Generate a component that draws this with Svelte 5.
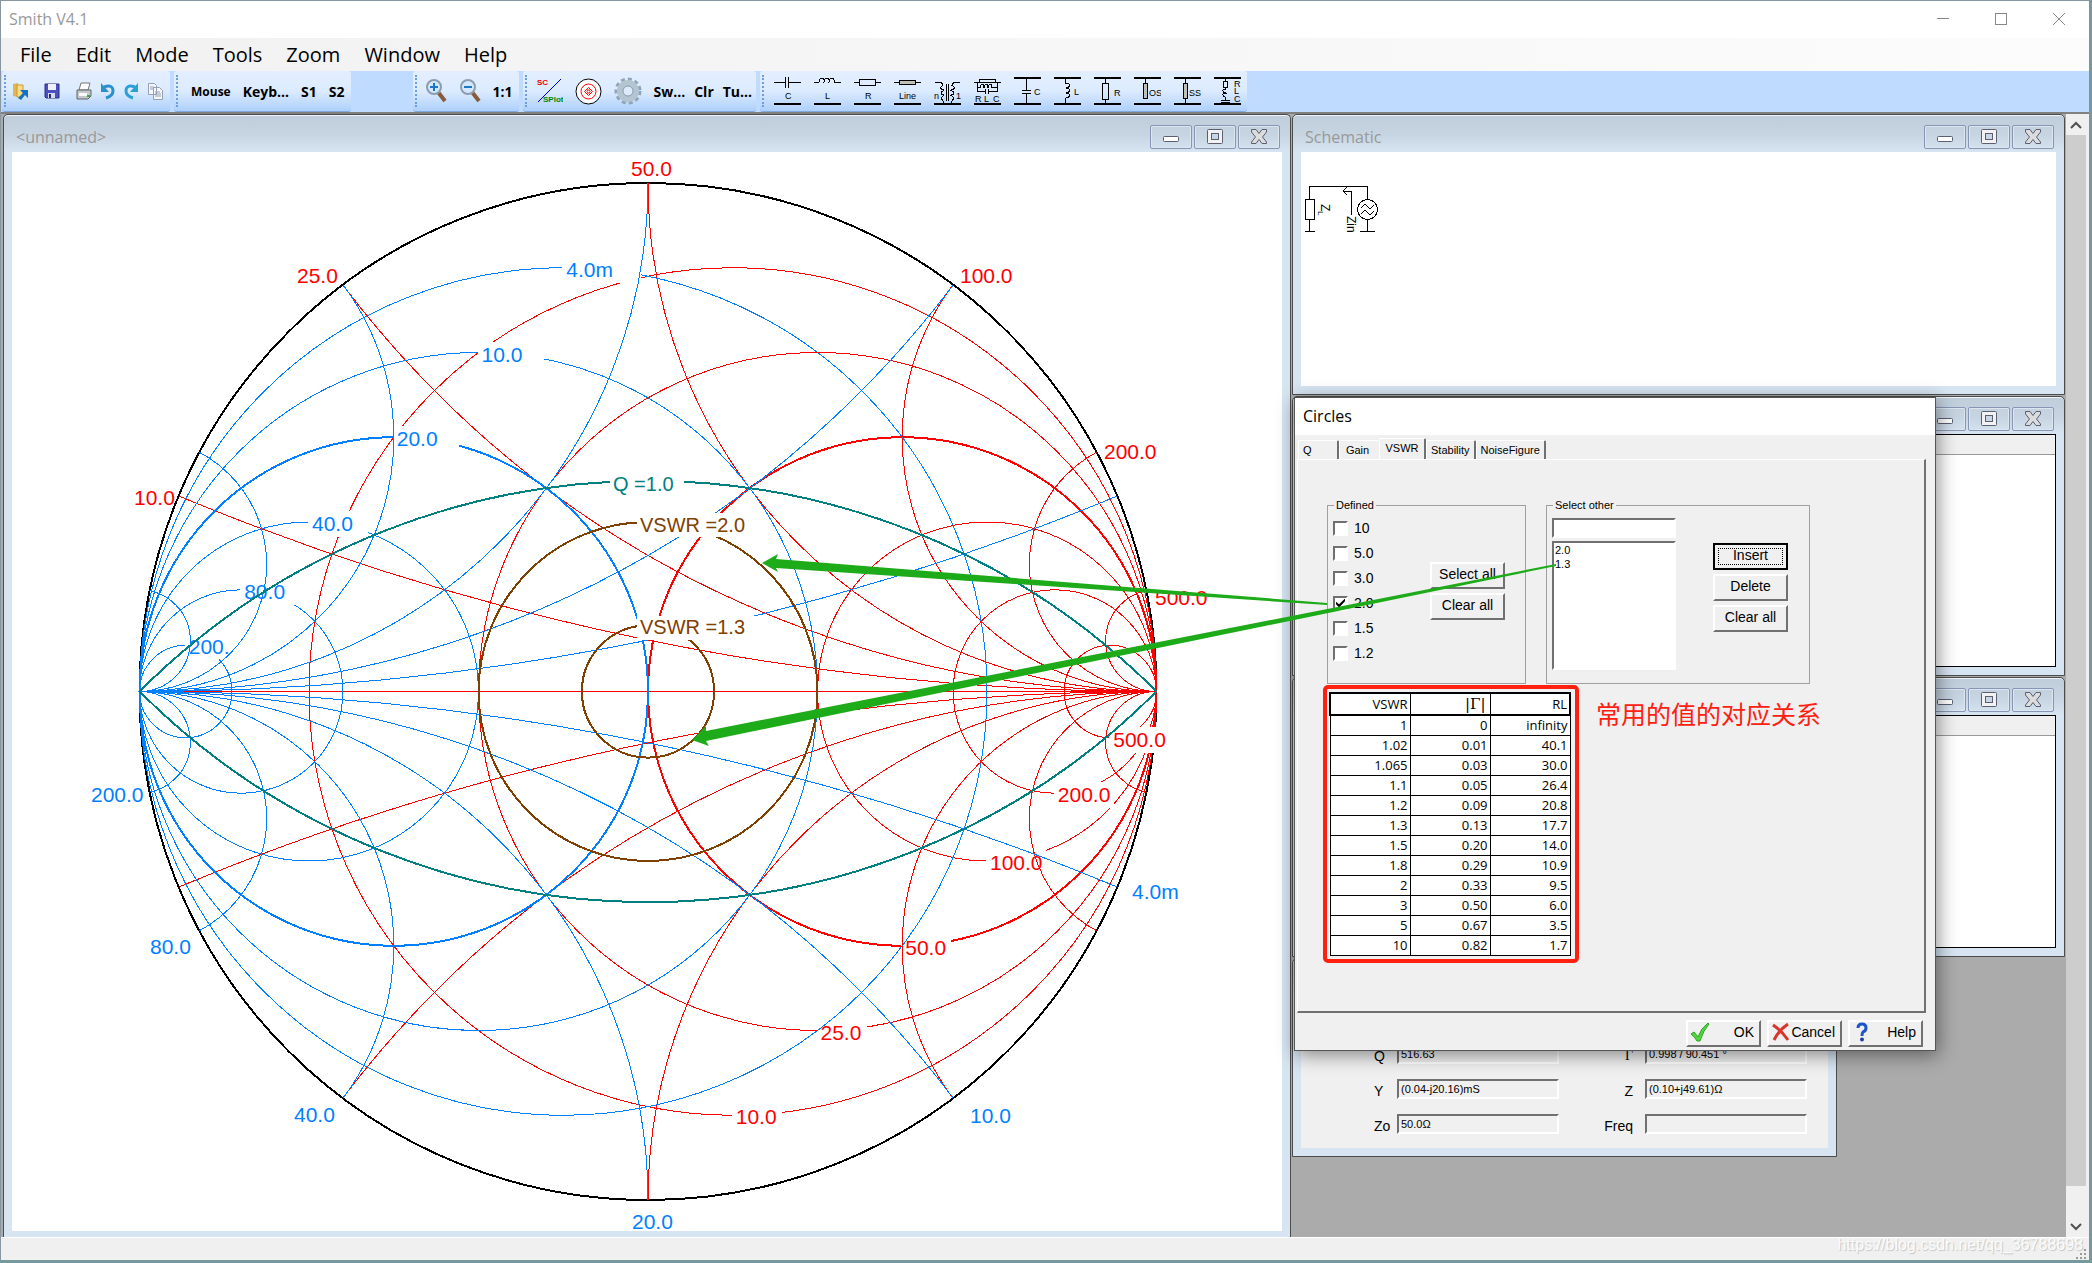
<script>
  const CX = 648;
  const CY = 691.5;
  const R = 508.5;

  const steps = [0.2, 0.5, 1, 2, 4, 10];
  const rLabels = ['10.0', '25.0', '50.0', '100.0', '200.0', '500.0'];
  const gLabels = ['4.0m', '10.0', '20.0', '40.0', '80.0', '200.'];
  const labelWidth = [50, 50, 50, 60, 60, 60];
  const gLabelWidth = [79, 66, 66, 60, 58, 34];

  // side is 1 for the impedance grid and -1 for the admittance grid
  function grid(side, labels, widths) {
    return steps.map((v, i) => {
      const cx = CX + (side * R * v) / (1 + v);
      const r = R / (1 + v);
      return {
        v,
        cx,
        r,
        arc: R / v,
        arcX: CX + side * R,
        edgeY: CY + side * r,
        label: labels[i],
        width: widths[i]
      };
    });
  }

  const grids = [
    { name: 'imp', rows: grid(1, rLabels, labelWidth) },
    { name: 'adm', rows: grid(-1, gLabels, gLabelWidth) }
  ];

  const rimLabels = [
    { x: 631, y: 176, t: '50.0', c: 'imp' },
    { x: 297, y: 283, t: '25.0', c: 'imp' },
    { x: 134, y: 505, t: '10.0', c: 'imp' },
    { x: 960, y: 283, t: '100.0', c: 'imp' },
    { x: 1104, y: 459, t: '200.0', c: 'imp' },
    { x: 1155, y: 605, t: '500.0', c: 'imp' },
    { x: 91, y: 802, t: '200.0', c: 'adm' },
    { x: 150, y: 954, t: '80.0', c: 'adm' },
    { x: 294, y: 1122, t: '40.0', c: 'adm' },
    { x: 632, y: 1229, t: '20.0', c: 'adm' },
    { x: 970, y: 1123, t: '10.0', c: 'adm' },
    { x: 1132, y: 899, t: '4.0m', c: 'adm' }
  ];

  const menus = ['File', 'Edit', 'Mode', 'Tools', 'Zoom', 'Window', 'Help'];
  const parts = ['C', 'L', 'R', 'Line', 'n:1', 'RLC', 'shunt C', 'shunt L', 'shunt R', 'OS', 'SS', 'shunt RLC'];
  const tabs = ['Q', 'Gain', 'VSWR', 'Stability', 'NoiseFigure'];

  let activeTab = $state('VSWR');
  let defined = $state([
    { label: '10', on: false },
    { label: '5.0', on: false },
    { label: '3.0', on: false },
    { label: '2.0', on: true },
    { label: '1.5', on: false },
    { label: '1.2', on: false }
  ]);
  let others = $state(['2.0', '1.3']);
  let newValue = $state('');
  let picked = $state('');

  const table = [
    ['1', '0', 'infinity'],
    ['1.02', '0.01', '40.1'],
    ['1.065', '0.03', '30.0'],
    ['1.1', '0.05', '26.4'],
    ['1.2', '0.09', '20.8'],
    ['1.3', '0.13', '17.7'],
    ['1.5', '0.20', '14.0'],
    ['1.8', '0.29', '10.9'],
    ['2', '0.33', '9.5'],
    ['3', '0.50', '6.0'],
    ['5', '0.67', '3.5'],
    ['10', '0.82', '1.7']
  ];

  const readings = [
    { id: 'q', label: 'Q', value: '516.63' },
    { id: 'gamma', label: 'Γ', value: '0.998 / 90.451 °' },
    { id: 'y', label: 'Y', value: '(0.04-j20.16)mS' },
    { id: 'z', label: 'Z', value: '(0.10+j49.61)Ω' },
    { id: 'zo', label: 'Zo', value: '50.0Ω' },
    { id: 'freq', label: 'Freq', value: '' }
  ];

  function setAll(on) {
    defined.forEach((d) => (d.on = on));
  }

  function insertValue() {
    if (newValue) others.push(newValue);
    newValue = '';
  }

  function deleteValue() {
    others = others.filter((o) => o !== picked);
  }
</script>

{#snippet caption(title)}
  <header class="caption">
    <span>{title}</span>
    <div class="caption-buttons">
      <button aria-label="Minimize">
        <svg width="18" height="18" viewBox="0 0 18 18"><rect x="1.5" y="8.5" width="15" height="5" rx="1" fill="#fff" stroke="#5a5f72" /></svg>
      </button>
      <button aria-label="Maximize">
        <svg width="18" height="18" viewBox="0 0 18 18"><rect x="1.5" y="1.5" width="15" height="14" rx="1" fill="#f2f2f2" stroke="#5a5f72" /><rect x="5.5" y="5.5" width="7" height="6" fill="#c9d6e5" stroke="#5a5f72" /></svg>
      </button>
      <button aria-label="Close">
        <svg width="18" height="18" viewBox="0 0 18 18"><path d="M1.5 1.5h4.5l3 4 3-4h4.500v2.500l-4 5 4 5v1.500h-4.500l-3-4-3 4h-4.500v-1.500l4-5-4-5z" fill="#dcdcdc" stroke="#5a5f72" stroke-linejoin="round" /></svg>
      </button>
    </div>
  </header>
{/snippet}

{#snippet part(name)}
  <svg width="27" height="28" viewBox="0 0 27 28" fill="none" stroke="#000" shape-rendering="crispEdges">
    {#if name === 'C'}
      <path d="M0 5.500h11M15 5.500h12M11.500 0v11M14.500 0v11" /><text x="11" y="22">C</text>
    {:else if name === 'L'}
      <path d="M0 5.500h5q0-5 4-4 2 2 1 4 0-5 4-4 2 2 1 4 0-5 4-4 2 2 2 4h6" /><text x="11" y="22">L</text>
    {:else if name === 'R'}
      <path d="M0 5.500h5M21 5.500h6" /><rect x="5.500" y="2.500" width="16" height="6" /><text x="11" y="22">R</text>
    {:else if name === 'Line'}
      <path d="M0 5.500h5M21 5.500h6" /><rect x="5.500" y="3.500" width="16" height="4" fill="#c0c0b8" /><text x="5" y="22">Line</text>
    {:else if name === 'n:1'}
      <path d="M1 5.500h4q4 0 4 3M9 8.500q-4 2-1 4 2 0 2 1-4 1-2 4 2 0 2 1-4 2-2 4l2 3M26 5.500h-4q-4 0-4 3M18 8.500q4 2 1 4-2 0-2 1 4 1 2 4-2 0-2 1 4 2 2 4l-2 3M12.500 7v17M14.500 7v17" /><text x="0" y="22">n</text><text x="22" y="22">1</text>
    {:else if name === 'RLC'}
      <path d="M0 5.500h6M22 5.500h5M3.500 5v9h8M15 14.500h8v-9M4 10.500h2q1-4 3-3 1 1 1 3 1-4 3-3 1 1 1 3 1-4 3-3 1 1 1 3h5M11.500 12v5M14.500 12v5" /><rect x="5.500" y="2.500" width="16" height="3" /><text x="1" y="25">R</text><text x="10" y="25">L</text><text x="19" y="25">C</text>
    {:else if name === 'shunt C'}
      <path d="M12.500 1v12M12.500 17v10M8 13.500h9M8 16.500h9" /><text x="20" y="18">C</text>
    {:else if name === 'shunt L'}
      <path d="M11.500 1v5q5 0 4 3-1 2-4 2 5 0 4 3-1 2-4 2 5 0 4 3-1 2-4 2v6" /><text x="20" y="18">L</text>
    {:else if name === 'shunt R'}
      <path d="M11.500 1v5M11.500 23v4" /><rect x="8.500" y="6.500" width="6" height="16" /><text x="20" y="19">R</text>
    {:else if name === 'OS'}
      <path d="M11.500 1v5" /><rect x="9.500" y="6.500" width="4" height="15" fill="#c0c0b8" /><text x="15" y="19">OS</text>
    {:else if name === 'SS'}
      <path d="M11.500 1v5M11.500 22v5" /><rect x="9.500" y="6.500" width="4" height="15" fill="#c0c0b8" /><text x="15" y="19">SS</text>
    {:else}
      <path d="M11.500 1v3M11.500 10v2q-4 1-2 3 1 1 3 1-5 0-3 3 1 1 2 1v3M7 23.500h9M7 25.500h9" /><rect x="9.500" y="4.500" width="4" height="6" /><text x="20" y="10">R</text><text x="20" y="17">L</text><text x="20" y="25">C</text>
    {/if}
    {#if parts.indexOf(name) > 5}<path d="M0 1h27" stroke-width="2" />{/if}
    <path d="M0 27h27" stroke-width="2" />
  </svg>
{/snippet}

<div class="app">
  <header class="titlebar">
    <span>Smith V4.1</span>
    <div class="sys">
      <button aria-label="Minimize"><svg width="12" height="12"><path d="M0 5.500h12" /></svg></button>
      <button aria-label="Maximize"><svg width="12" height="12"><rect x="0.500" y="0.500" width="11" height="11" /></svg></button>
      <button aria-label="Close"><svg width="12" height="12"><path d="M0 0l12 12M12 0l-12 12" /></svg></button>
    </div>
  </header>

  <nav class="menubar">
    {#each menus as m}
      <button>{m}</button>
    {/each}
  </nav>

  <div class="toolbars">
    <div class="group files">
      <button aria-label="Open"><svg width="16" height="18" viewBox="0 0 16 18"><path d="M1 2l5-1v14l-5-1z" fill="#e2b64c" /><path d="M5 3h6v12h-6z" fill="#f7dc8a" stroke="#c99b35" /><path d="M6 16l5-5-3-3h8v8l-3-3-4 5z" fill="#1272c4" /></svg></button>
      <button class="roomy" aria-label="Save"><svg width="16" height="18" viewBox="0 0 16 18"><path d="M1 2h14v14h-13l-1-1z" fill="#4b50c0" stroke="#2d2f86" /><rect x="4" y="2" width="8" height="6" fill="#eef0ff" /><rect x="4" y="11" width="7" height="5" fill="#d7d9ee" /><rect x="5" y="12" width="2" height="4" fill="#222a70" /></svg></button>
      <button class="roomy" aria-label="Print"><svg width="16" height="18" viewBox="0 0 16 18"><path d="M5 1h9l-2 7h-9z" fill="#fff" stroke="#777" /><path d="M1 8h14v6l-3 3h-11z" fill="#c3c7cc" stroke="#5f6468" /><path d="M3 11h8v3h-8z" fill="#fafafa" /><rect x="11" y="13" width="3" height="2" fill="#29b73a" /></svg></button>
      <button aria-label="Undo"><svg width="14" height="18" viewBox="0 0 14 18"><path d="M3 5q9-3 9 4 0 5-7 7" fill="none" stroke="#2b8fd0" stroke-width="3" /><path d="M0 1v9h8z" fill="#2b8fd0" /></svg></button>
      <button aria-label="Redo"><svg width="14" height="18" viewBox="0 0 14 18"><path d="M11 5q-9-3-9 4 0 5 7 7" fill="none" stroke="#2aa0d6" stroke-width="3" /><path d="M14 1v9h-8z" fill="#2aa0d6" /></svg></button>
      <button aria-label="Copy"><svg width="16" height="18" viewBox="0 0 16 18" fill="#f4f6fa" stroke="#96a0b4"><path d="M1.500 1.500h6l2 2v9h-8zM6.500 5.500h6l3 3v9h-9z" /><path d="M3 5h4M3 7h3M8 10h5M8 12h6M8 14h6" /></svg></button>
    </div>
    <div class="group modes">
      <button class="small">Mouse</button>
      <button>Keyb...</button>
      <button>S1</button>
      <button>S2</button>
    </div>
    <div class="group zooms">
      <button aria-label="Zoom in"><svg width="22" height="24" viewBox="0 0 22 24"><path d="M13 13l7 9" stroke="#8a5a3a" stroke-width="4" /><circle cx="9" cy="8" r="7" fill="#d3e9fb" stroke="#8d9db0" stroke-width="2" /><path d="M5 8h8M9 4v8" stroke="#1877c9" stroke-width="2" /></svg></button>
      <button aria-label="Zoom out"><svg width="22" height="24" viewBox="0 0 22 24"><path d="M13 13l7 9" stroke="#8a5a3a" stroke-width="4" /><circle cx="9" cy="8" r="7" fill="#d3e9fb" stroke="#8d9db0" stroke-width="2" /><path d="M5 8h8" stroke="#1877c9" stroke-width="2" /></svg></button>
      <button>1:1</button>
    </div>
    <div class="group views">
      <button aria-label="S-parameter plot"><svg width="26" height="26" viewBox="0 0 26 26"><path d="M1 24l23-23" stroke="#00c" /><text class="tiny" x="0" y="7" fill="#e00">SC</text><text class="tiny" x="6" y="24" fill="#080">SPlot</text></svg></button>
      <button aria-label="Smith chart"><svg width="27" height="27" viewBox="0 0 27 27"><circle cx="13.500" cy="13.500" r="12.500" fill="#fff" stroke="#000" /><g fill="none" stroke="#f00"><circle cx="13.500" cy="13.500" r="7.500" /><path d="M13.500 9.500l4 4-4 4-4-4z" /><circle cx="13.500" cy="13.500" r="1.500" /></g></svg></button>
      <button aria-label="Settings"><svg width="28" height="30" viewBox="0 0 28 30" fill="none"><circle cx="14" cy="15" r="12" stroke="#8fa5b7" stroke-width="3" stroke-dasharray="4 3" /><circle cx="14" cy="15" r="8" stroke="#b4c4d0" stroke-width="6" /><circle cx="14" cy="15" r="5" fill="#dceafa" stroke="#869bad" /></svg></button>
      <div class="words">
        <button>Sw...</button>
        <button>Clr</button>
        <button>Tu...</button>
      </div>
    </div>
    <div class="group parts">
      {#each parts as p}
        <button aria-label={p}>{@render part(p)}</button>
      {/each}
    </div>
  </div>

  <main class="mdi">
    <section class="win chart-win">
      {@render caption('<unnamed>')}
      <div class="body">
        <svg class="chart" viewBox="12 152 1270 1079" fill="none" shape-rendering="crispEdges">
          <clipPath id="unit"><circle cx={CX} cy={CY} r={R} /></clipPath>
          <circle cx={CX} cy={CY} r={R} stroke="#000" stroke-width="2" />
          <path class="imp" d="M139 691.500h1018" />
          {#each grids as g}
            <g class={g.name}>
              {#each g.rows as c}
                <circle class:thick={c.v === 1} cx={c.cx} cy={CY} r={c.r} />
                <rect x={c.cx - 1} y={c.edgeY - 11} width={c.width} height="26" />
                <text x={c.cx + 3} y={c.edgeY + 9}>{c.label}</text>
                <g clip-path="url(#unit)">
                  <circle cx={c.arcX} cy={CY - c.arc} r={c.arc} />
                  <circle cx={c.arcX} cy={CY + c.arc} r={c.arc} />
                </g>
              {/each}
            </g>
          {/each}
          {#each rimLabels as l}
            <g class={l.c}><text x={l.x} y={l.y}>{l.t}</text></g>
          {/each}
          <g class="q">
            <g clip-path="url(#unit)">
              <circle cx={CX} cy={CY + R} r={R * Math.SQRT2} />
              <circle cx={CX} cy={CY - R} r={R * Math.SQRT2} />
            </g>
            <rect x="610" y="472" width="74" height="24" />
            <text x="613" y="491">Q =1.0</text>
          </g>
          <g class="vswr">
            <circle cx={CX} cy={CY} r={R / 3} />
            <rect x="637" y="513" width="120" height="24" />
            <text x="640" y="532">VSWR =2.0</text>
            <circle cx={CX} cy={CY} r={R * 0.13} />
            <rect x="637" y="616" width="120" height="24" />
            <text x="640" y="634">VSWR =1.3</text>
          </g>
        </svg>
      </div>
    </section>

    <div class="side">
      <section class="win tall">
        {@render caption('Schematic')}
        <div class="body">
          <svg class="schematic" width="90" height="90" fill="none" stroke="#000" shape-rendering="crispEdges">
            <path d="M8.500 47v-12.500h58v12.500M8.500 67v12M4 79.500h10M66.500 67v12M59 79.500h15M50.500 63v-24h-8M46 35l-4 4 4 4" />
            <rect x="4.500" y="47.500" width="9" height="20" />
            <circle cx="66.500" cy="57.500" r="10" />
            <path d="M60 56l4-4 5 5 4-4M60 62l4-4 5 5 4-4" />
            <g transform="translate(20 52) rotate(90)"><text>Z</text><text class="sub" x="7" y="3">L</text></g>
            <g transform="translate(46 64) rotate(90)"><text>Zin</text></g>
          </svg>
        </div>
      </section>
      <section class="win list-win">
        {@render caption('')}
        <div class="body"><div class="list-head"></div></div>
      </section>
      <section class="win list-win">
        {@render caption('')}
        <div class="body"><div class="list-head"></div></div>
      </section>
      <section class="win info">
        {@render caption('')}
        <div class="body readings">
          {#each readings as r}
            <label for={r.id} class:greek={r.label === 'Γ'}>{r.label}</label>
            <input id={r.id} class="sunken" value={r.value} readonly />
          {/each}
        </div>
      </section>

      <section class="dialog" role="dialog" aria-label="Circles">
        <h2>Circles</h2>
        <div class="tabs" role="tablist">
          {#each tabs as t}
            <button role="tab" aria-selected={activeTab === t} class:active={activeTab === t} onclick={() => (activeTab = t)}>{t}</button>
          {/each}
        </div>
        <div class="panel">
          <div class="groups">
            <fieldset class="defined">
              <legend>Defined</legend>
              <div class="checks">
                {#each defined as d}
                  <label><input type="checkbox" bind:checked={d.on} />{d.label}</label>
                {/each}
              </div>
              <div class="stack">
                <button class="btn" onclick={() => setAll(true)}>Select all</button>
                <button class="btn" onclick={() => setAll(false)}>Clear all</button>
              </div>
            </fieldset>
            <fieldset class="other">
              <legend>Select other</legend>
              <div class="entry">
                <input class="sunken" aria-label="VSWR value" bind:value={newValue} />
                <select class="sunken" size="9" aria-label="VSWR values" bind:value={picked}>
                  {#each others as o}
                    <option value={o}>{o}</option>
                  {/each}
                </select>
              </div>
              <div class="stack">
                <button class="btn default" onclick={insertValue}>Insert</button>
                <button class="btn" onclick={deleteValue}>Delete</button>
                <button class="btn" onclick={() => (others = [])}>Clear all</button>
              </div>
            </fieldset>
          </div>
          <div class="notes">
            <div class="red-box">
              <table>
                <thead>
                  <tr><th>VSWR</th><th class="greek">|Γ|</th><th>RL</th></tr>
                </thead>
                <tbody>
                  {#each table as row}
                    <tr>{#each row as cell}<td>{cell}</td>{/each}</tr>
                  {/each}
                </tbody>
              </table>
            </div>
            <p>常用的值的对应关系</p>
          </div>
        </div>
        <footer>
          <button class="btn"><svg width="20" height="20" viewBox="0 0 20 20"><path d="M1 12l3-2 4 5q3-9 10-14l1 1q-6 7-9 17h-3q-2-4-6-7z" fill="#4fd83c" stroke="#2da322" /></svg>OK</button>
          <button class="btn"><svg width="20" height="20" viewBox="0 0 20 20"><path d="M2 3q9 6 15 15M17 2q-9 6-14 16" fill="none" stroke="#d8362a" stroke-width="3" /></svg>Cancel</button>
          <button class="btn"><svg width="20" height="20" viewBox="0 0 20 20"><path d="M6 6q0-4 4-4t4 4q0 3-3 4-1 1-1 4" fill="none" stroke="#1d55c8" stroke-width="3" /><circle cx="10" cy="17.500" r="2" fill="#1d3fa8" /></svg>Help</button>
        </footer>
      </section>
    </div>

    <div class="scroll">
      <button aria-label="Scroll up"><svg width="12" height="8"><path d="M1 7l5-5 5 5" /></svg></button>
      <div class="thumb"></div>
      <button aria-label="Scroll down"><svg width="12" height="8"><path d="M1 1l5 5 5-5" /></svg></button>
    </div>
  </main>

  <footer class="status">
    <span>https://blog.csdn.net/qq_36788698</span>
    <svg width="12" height="12" fill="#9a9a9a"><path d="M9 1h2v2h-2zM5 5h2v2h-2zM9 5h2v2h-2zM1 9h2v2h-2zM5 9h2v2h-2zM9 9h2v2h-2z" /></svg>
  </footer>

  <svg class="arrows" fill="#1dab1a">
    <path d="M762 563l16-9-2 5 551 44v2l-551-37 2 4z" />
    <path d="M692 740l14-14v5l850-167v2l-850 175 3 5z" />
  </svg>
</div>

<style>
  :global(body) {
    background: #75999c;
    font-family: "Liberation Sans", Arial, sans-serif;
  }

  * {
    box-sizing: border-box;
  }

  button {
    font-family: inherit;
    color: #000;
    background: none;
    border: 0;
    padding: 0;
  }

  .app {
    position: relative;
    height: calc(100vh - 3px);
    margin-right: 3px;
    border-top: 1px solid #8796a0;
    border-left: 1px solid #8796a0;
    display: flex;
    flex-direction: column;
    background: #fff;
    overflow: hidden;
  }

  .titlebar {
    height: 37px;
    padding: 0 24px 2px 8px;
    display: flex;
    align-items: center;
    justify-content: space-between;
    font: 16px "Open Sans", sans-serif;
    color: #999;
  }

  .sys {
    display: flex;
    gap: 46px;
  }

  .sys button {
    width: 12px;
    height: 12px;
    display: flex;
  }

  .sys svg {
    fill: none;
    stroke: #888;
  }

  .menubar {
    height: 33px;
    padding-left: 19px;
    display: flex;
    gap: 24px;
    background: linear-gradient(90deg, #f1f1f1, #fcfcfc);
  }

  .menubar button {
    font: 20px "Open Sans", sans-serif;
  }

  .toolbars {
    height: 41px;
    display: flex;
    gap: 4px;
    padding-left: 1px;
    background: #bfdbff;
  }

  .group {
    position: relative;
    display: flex;
    align-items: center;
    gap: 12px;
    border-radius: 3px;
    border-bottom: 1px solid #7fa9de;
    background: linear-gradient(#e3efff, #dcebff 50%, #aed0fb);
  }

  .group::before {
    content: "";
    position: absolute;
    left: 2px;
    top: 4px;
    bottom: 4px;
    border-left: 2px dotted #6d9ede;
  }

  .group button {
    display: flex;
    font: bold 14px "Open Sans", sans-serif;
  }

  .group button.small {
    font-size: 12px;
  }

  .files {
    gap: 9px;
    padding: 0 7px 0 10px;
  }

  .files .roomy {
    margin-left: 7px;
  }

  .modes {
    padding: 0 6px 0 17px;
    margin-right: 58px;
  }

  .zooms {
    padding: 0 6px 0 12px;
  }

  .views {
    padding: 0 4px 0 14px;
  }

  .words {
    display: flex;
    gap: 9px;
  }

  .parts {
    padding: 0 6px 0 14px;
    gap: 13px;
  }

  .parts text {
    font: 9px "Liberation Sans", sans-serif;
    fill: #000;
    stroke: none;
  }

  .tiny {
    font: bold 8px "Liberation Sans", sans-serif;
  }

  .mdi {
    flex: 1;
    min-height: 0;
    padding: 0 3px 0 2px;
    border-top: 2px solid #808080;
    display: grid;
    grid-template-columns: 1288fr 773fr 20px;
    gap: 1px;
    background: #ababab;
  }

  .win {
    border: 1px solid #4c4c4c;
    border-radius: 5px 5px 0 0;
    padding: 0 8px 8px;
    display: flex;
    flex-direction: column;
    background: linear-gradient(#bfcddb, #c7d4e1 20px, #d7e4f2 37px);
    box-shadow: inset 0 1px #eef4fa;
  }

  .chart-win {
    border-bottom: 0;
    padding-bottom: 6px;
    min-height: 0;
  }

  .caption {
    flex: none;
    height: 37px;
    padding: 10px 2px 0 4px;
    display: flex;
    justify-content: space-between;
    font: 16px/24px "Open Sans", sans-serif;
    color: #999;
  }

  .caption-buttons {
    display: flex;
    gap: 2px;
  }

  .caption-buttons button {
    width: 42px;
    height: 24px;
    display: flex;
    align-items: center;
    justify-content: center;
    border: 1px solid #8796b5;
    border-radius: 2px;
    box-shadow: inset 0 0 0 1px #dbe6f1;
  }

  .body {
    flex: 1;
    min-height: 0;
    background: #fff;
  }

  .chart {
    display: block;
    width: 100%;
    height: 100%;
    overflow: visible;
  }

  .chart rect {
    fill: #fff;
    stroke: none;
  }

  .chart text {
    font-size: 21px;
    stroke: none;
  }

  .imp {
    stroke: #f00;
  }

  .imp text {
    fill: #f00;
  }

  .adm {
    stroke: #007fff;
  }

  .adm text {
    fill: #007fff;
  }

  .thick {
    stroke-width: 2;
  }

  .q {
    stroke: #008080;
    stroke-width: 2;
  }

  .chart .q text {
    font-size: 20px;
    fill: #008080;
  }

  .vswr {
    stroke: #804000;
    stroke-width: 2;
  }

  .chart .vswr text {
    font-size: 20px;
    fill: #804000;
  }

  .side {
    position: relative;
    display: flex;
    flex-direction: column;
    gap: 1px;
  }

  .side .win {
    height: 280px;
  }

  .side .tall {
    height: 281px;
  }

  .schematic {
    display: block;
  }

  .schematic text {
    font-size: 12px;
    fill: #000;
    stroke: none;
  }

  .schematic .sub {
    font-size: 8px;
  }

  .list-win .body {
    border: 1px solid #000;
  }

  .list-head {
    height: 20px;
    background: #f0f0f0;
    border-bottom: 1px solid #999;
  }

  .side .info {
    width: 545px;
    height: 199px;
  }

  .readings {
    display: grid;
    grid-template-columns: 23px 162px 86px 162px;
    grid-auto-rows: 20px;
    row-gap: 15px;
    padding: 48px 0 0 73px;
    background: #f0f0f0;
    font-size: 14px;
    line-height: 24px;
  }

  .readings label:nth-of-type(even) {
    text-align: right;
    padding-right: 12px;
  }

  .greek {
    font-family: "Liberation Serif", serif;
  }

  .sunken {
    border: 2px solid;
    border-color: #707070 #fff #fff #707070;
    border-radius: 0;
    outline: 0;
    margin: 0;
    padding: 0 2px;
    background: #fff;
    font: 11px "Liberation Sans", sans-serif;
  }

  .readings .sunken {
    min-width: 0;
    background: #f0f0f0;
  }

  .dialog {
    position: absolute;
    left: 2px;
    top: 283px;
    width: 642px;
    height: 654px;
    display: flex;
    flex-direction: column;
    border: 1px solid #555;
    background: #f0f0f0;
    box-shadow: 2px 4px 18px rgba(0, 0, 0, 0.45);
  }

  h2 {
    margin: 0;
    height: 37px;
    padding-left: 8px;
    background: #fff;
    font: 16px/36px "Open Sans", sans-serif;
  }

  .tabs {
    height: 24px;
    padding-left: 3px;
    display: flex;
    align-items: flex-end;
  }

  .tabs button {
    height: 19px;
    padding: 0 4px;
    border: 1px solid #fff;
    border-right: 2px solid #707070;
    border-bottom: 0;
    border-radius: 2px 2px 0 0;
    font-size: 11px;
  }

  .tabs button:first-child {
    width: 41px;
    text-align: left;
  }

  .tabs button:nth-child(2) {
    border-right: 0;
    width: 40px;
    padding-right: 8px;
  }

  .tabs button.active {
    height: 21px;
    padding-bottom: 3px;
    width: 47px;
  }

  .panel {
    flex: 1;
    margin: 0 9px 0 2px;
    padding: 38px 0 0 29px;
    border: 2px solid;
    border-width: 1px 2px 2px 1px;
    border-color: #fff #707070 #707070 #fff;
  }

  .groups {
    display: flex;
    gap: 20px;
  }

  fieldset {
    margin: 0;
    border: 1px solid #a0a0a0;
    display: flex;
    height: 186px;
    padding: 8px 5px 0;
  }

  legend {
    font-size: 11px;
    line-height: 14px;
    padding: 0 2px;
    margin-left: 1px;
  }

  .defined {
    width: 199px;
    justify-content: space-between;
    padding-right: 20px;
  }

  .other {
    width: 264px;
    justify-content: space-between;
    padding: 6px 21px 0 5px;
  }

  .checks {
    display: flex;
    flex-direction: column;
    gap: 9px;
  }

  .checks label {
    display: flex;
    align-items: center;
    gap: 6px;
    font-size: 14px;
    line-height: 16px;
  }

  .checks input {
    appearance: none;
    width: 15px;
    height: 15px;
    margin: 0;
    border: 2px solid;
    border-color: #707070 #fff #fff #707070;
    background: #fff;
  }

  .checks input:checked::after {
    content: "";
    display: block;
    width: 9px;
    height: 9px;
    margin: 1px;
    background: #000;
    clip-path: polygon(0 35%, 35% 65%, 100% 0, 100% 30%, 35% 100%, 0 65%);
  }

  .stack {
    display: flex;
    flex-direction: column;
    gap: 4px;
    padding-top: 42px;
  }

  .other .stack {
    padding-top: 25px;
  }

  .btn {
    width: 75px;
    height: 27px;
    padding-bottom: 3px;
    border: 2px solid;
    border-color: #fff #707070 #707070 #fff;
    background: #f0f0f0;
    font-size: 14px;
    white-space: nowrap;
  }

  .default {
    border-color: #000;
    outline: 1px dotted #000;
    outline-offset: -6px;
  }

  .entry {
    display: flex;
    flex-direction: column;
    gap: 3px;
    width: 124px;
  }

  .entry input {
    height: 20px;
  }

  .entry select {
    appearance: none;
    height: 129px;
    overflow: hidden;
    padding: 1px 0;
  }

  .entry option {
    min-height: 14px;
    line-height: 14px;
    padding: 0 1px;
  }

  .notes {
    display: flex;
    gap: 17px;
    margin: 1px 0 0 -4px;
  }

  .red-box {
    border: 4px solid #ff2010;
    border-radius: 5px;
    padding: 3px 4px 3px 2px;
  }

  table {
    border-collapse: collapse;
    table-layout: fixed;
    width: 242px;
    background: #fff;
    font: 13px "Open Sans", sans-serif;
  }

  th,
  td {
    height: 20px;
    padding: 0 2px;
    border: 1px solid #000;
    text-align: right;
    font-weight: normal;
    line-height: 18px;
  }

  th {
    height: 22px;
  }

  th.greek {
    padding-right: 4px;
    font-family: "DejaVu Serif", serif;
    font-size: 15px;
  }

  thead {
    border: 2px solid #000;
  }

  .notes p {
    margin: 10px 0 0;
    color: #ff2010;
    font: 25px/36px "Noto Sans CJK SC", sans-serif;
  }

  .dialog footer {
    height: 37px;
    padding: 7px 12px 0;
    display: flex;
    justify-content: flex-end;
    gap: 6px;
  }

  .dialog footer .btn {
    display: flex;
    align-items: center;
    justify-content: space-between;
    padding: 0 5px 3px 2px;
  }

  .scroll {
    display: flex;
    flex-direction: column;
    background: #f0f0f0;
    outline: 3px solid #f0f0f0;
    clip-path: inset(0 -3px 0 0);
  }

  .scroll button {
    height: 21px;
    display: flex;
    align-items: center;
    justify-content: center;
  }

  .scroll svg {
    fill: none;
    stroke: #505050;
    stroke-width: 2;
  }

  .thumb {
    flex: 1;
    margin-bottom: 30px;
    background: #cdcdcd;
  }

  .status {
    height: 23px;
    padding-right: 2px;
    display: flex;
    justify-content: flex-end;
    background: #f0f0f0;
    border-top: 1px solid #fff;
    font-size: 16px;
    line-height: 14px;
    color: #fbfbfb;
    text-shadow: 1px 1px 1px #c4c4c4;
  }

  .status svg {
    align-self: flex-end;
    margin-left: -8px;
  }

  .arrows {
    position: absolute;
    left: -1px;
    top: -1px;
    width: 100%;
    height: 100%;
    pointer-events: none;
  }
</style>
